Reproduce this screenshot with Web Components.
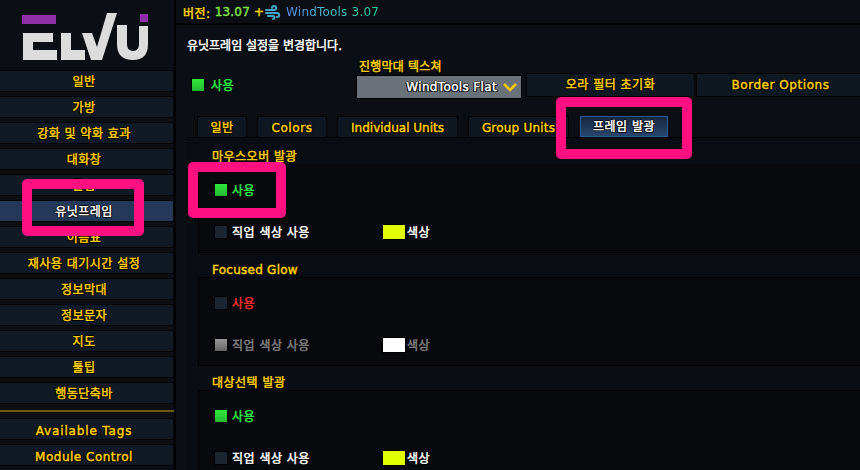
<!doctype html>
<html>
<head>
<meta charset="utf-8">
<style>
html, body { margin: 0; height: 100%; background: #000; overflow: hidden; }
body {
  font: 400 12px "DejaVu Sans", "Noto Sans CJK KR", sans-serif;
  color: #fff;
}
</style>
</head>
<body>
<elv-window>
  <elv-sidebar slot="side">
    <elv-logo></elv-logo>
    <elv-nav>일반</elv-nav>
    <elv-nav>가방</elv-nav>
    <elv-nav>강화 및 약화 효과</elv-nav>
    <elv-nav>대화창</elv-nav>
    <elv-nav>툴팁</elv-nav>
    <elv-nav active>유닛프레임</elv-nav>
    <elv-nav>이름표</elv-nav>
    <elv-nav>재사용 대기시간 설정</elv-nav>
    <elv-nav>정보막대</elv-nav>
    <elv-nav>정보문자</elv-nav>
    <elv-nav>지도</elv-nav>
    <elv-nav>툴팁</elv-nav>
    <elv-nav>행동단축바</elv-nav>
    <elv-rule></elv-rule>
    <elv-nav style="letter-spacing:.85px">Available Tags</elv-nav>
    <elv-nav style="letter-spacing:.5px">Module Control</elv-nav>
  </elv-sidebar>
  <elv-version slot="top"></elv-version>
  <elv-panel slot="main">
    <elv-intro slot="intro" style="letter-spacing:0">유닛프레임 설정을 변경합니다.</elv-intro>
    <elv-check slot="enable" state="on" style="gap:7px">사용</elv-check>
    <elv-select slot="select" label="진행막대 텍스쳐"><span style="letter-spacing:.35px">WindTools Flat</span></elv-select>
    <elv-button slot="btn">오라 필터 초기화</elv-button>
    <elv-button slot="btn" style="letter-spacing:.55px">Border Options</elv-button>
    <elv-tab slot="tabs" style="width:50px">일반</elv-tab>
    <elv-tab slot="tabs" style="width:70px;letter-spacing:.6px">Colors</elv-tab>
    <elv-tab slot="tabs" style="width:121px">Individual Units</elv-tab>
    <elv-tab slot="tabs" style="width:101px;letter-spacing:.2px">Group Units</elv-tab>
    <elv-tab slot="tabs" style="width:88px" active>프레임 발광</elv-tab>
    <elv-group title="마우스오버 발광">
      <elv-check state="on">사용</elv-check>
      <elv-check slot="second">직업 색상 사용</elv-check>
      <elv-swatch slot="second" color="#e0ff00">색상</elv-swatch>
    </elv-group>
    <elv-group title="Focused Glow">
      <elv-check state="off">사용</elv-check>
      <elv-check slot="second" state="disabled">직업 색상 사용</elv-check>
      <elv-swatch slot="second" color="#ffffff" disabled>색상</elv-swatch>
    </elv-group>
    <elv-group title="대상선택 발광">
      <elv-check state="on">사용</elv-check>
      <elv-check slot="second">직업 색상 사용</elv-check>
      <elv-swatch slot="second" color="#e0ff00">색상</elv-swatch>
    </elv-group>
  </elv-panel>
  <elv-mark style="left:22px;top:179px;width:122px;height:57px"></elv-mark>
  <elv-mark style="left:188px;top:162px;width:98px;height:56px"></elv-mark>
  <elv-mark style="left:556px;top:97px;width:136px;height:62px"></elv-mark>
</elv-window>
<script>
const outline = '-1px 0 #000, 1px 0 #000, 0 -1px #000, 0 1px #000, 1px 1px #000, -1px 1px #000'
const font = '"DejaVu Sans", "Noto Sans CJK KR", sans-serif'
const heavy = '-webkit-text-stroke: .45px currentColor;'
const hangul = /[가-힣]/

// small helper so each element only lists its template
function define(name, css, markup, proto) {
  const tpl = document.createElement('template')
  tpl.innerHTML = `<style>${css}</style>${markup}`
  class El extends HTMLElement {
    constructor() {
      super()
      this.attachShadow({mode: 'open'})
      this.shadowRoot.append(tpl.content.cloneNode(true))
    }
    connectedCallback() {
      const own = [...this.childNodes].filter(n => n.nodeType == 3).map(n => n.data).join('')
      if (hangul.test(own) && !this.style.letterSpacing) this.style.letterSpacing = '.5px'
      if (own.trim() && !hangul.test(own)) this.setAttribute('latin', '')
      if (proto) proto.call(this, this.shadowRoot)
    }
  }
  customElements.define(name, El)
}

define('elv-window', `
:host { display: grid; grid-template-columns: 175px 1fr; grid-template-rows: 24px 1fr; width: 860px; height: 470px; position: relative; overflow: hidden; background: #000; }
.side { grid-row: 1 / 3; }
.top { padding-left: 1px; }
.main { padding: 1px 0 0 1px; min-width: 0; }
`, `<div class="side"><slot name="side"></slot></div>
<div class="top"><slot name="top"></slot></div>
<div class="main"><slot name="main"></slot></div>
<slot></slot>`)

define('elv-sidebar', `
:host { display: flex; flex-direction: column; align-items: stretch; height: 470px; background: #0b0e13; border-right: 1px solid #000; box-sizing: border-box; }
`, `<slot></slot>`)

define('elv-logo', `
:host { display: block; height: 70px; flex: none; }
svg { display: block; }
`, `<svg width="174" height="70" viewBox="0 0 174 70">
  <rect x="22" y="15" width="34" height="9" fill="#8f2fa8"/>
  <rect x="140" y="14" width="8" height="8" fill="#8f2fa8"/>
  <path fill="#dcdcdc" d="M23 33H53V42H33V50H57V60H23Z"/>
  <path fill="#dcdcdc" d="M61 33H71V50H85V60H61Z"/>
  <path fill="#dcdcdc" d="M82 33H92L97 47L107 13H117L102 60H91Z"/>
  <path fill="#dcdcdc" d="M117 25H127V44Q127 51 133 51Q139 51 139 44V26H148V44Q148 60 133 60Q117 60 117 44Z"/>
</svg>`)

define('elv-nav', `
:host { display: block; flex: none; height: 22px; margin-bottom: 4px; box-sizing: border-box; padding-right: 5px; background: #111a24; border-top: 1px solid #000; border-bottom: 1px solid #000; border-right: 1px solid #000;
  text-align: center; font: 400 12px/22px ${font}; ${heavy} color: #ffd100; text-shadow: ${outline}; }
:host([latin]) { line-height: 24px; }
:host([active]) { background: #24395a; color: #fff; }
`, `<slot></slot>`)

define('elv-rule', `
:host { display: block; flex: none; height: 2px; background: #6b5a10; margin: 2px 0 6px; }
`, ``)

define('elv-version', `
:host { display: flex; align-items: center; height: 23px; padding: 1px 0 0 7px; box-sizing: border-box; background: #0b0e13; font: 400 12px ${font}; text-shadow: 1px 1px #000; }
.k { color: #ffd100; ${heavy} letter-spacing: .5px; }
.v { color: #7fe04a; margin-left: 4px; letter-spacing: .2px; ${heavy} }
.p { color: #ffd100; margin-left: 4px; ${heavy} }
svg { margin: 0 5px 0 1px; }
.w { background: linear-gradient(90deg, #5a8cf0, #3fc8c0 60%, #20d0a0); -webkit-background-clip: text; background-clip: text; color: transparent; text-shadow: none; letter-spacing: .2px; font-size: 12px; }
`, `<span class="k">버전:</span><span class="v">13.07</span><span class="p">+</span>
<svg width="16" height="15" viewBox="0 0 16 15" fill="none" stroke="#45a6c8" stroke-width="2" stroke-linecap="round">
  <path d="M1 5H9C12 5 12 1 9 1C8 1 7 2 7 3"/>
  <path d="M1 8H12C15 8 15 12 12 12"/>
  <path d="M3 11H8C10 11 10 14 8 14"/>
</svg>
<span class="w">WindTools 3.07</span>`)

define('elv-panel', `
:host { display: block; height: 445px; background: #0b0e13; box-sizing: border-box; padding-left: 11px; overflow: hidden; }
.intro { height: 40px; padding-top: 11px; box-sizing: border-box; }
.row { display: flex; height: 50px; }
.enable { width: 169px; flex: none; padding: 11px 0 0 5px; box-sizing: border-box; }
.tabs { display: flex; gap: 10px; padding-left: 10px; height: 21px; box-sizing: border-box; margin-top: 1px; }
.body { border-top: 1px solid #000; margin-right: -1px; padding-left: 11px; background: #090c10; height: 340px; }
.btns { display: flex; gap: 1px; padding-left: 4px; }
`, `<div class="intro"><slot name="intro"></slot></div>
<div class="row">
  <div class="enable"><slot name="enable"></slot></div>
  <slot name="select"></slot>
  <div class="btns"><slot name="btn"></slot></div>
</div>
<div class="tabs"><slot name="tabs"></slot></div>
<div class="body"><slot></slot></div>`)

define('elv-intro', `
:host { display: block; font: 400 12px ${font}; ${heavy} color: #fff; text-shadow: 1px 1px #000; }
`, `<slot></slot>`)

define('elv-check', `
:host { display: inline-flex; align-items: center; gap: 5px; font: 400 12px ${font}; ${heavy} color: #fff; text-shadow: 1px 1px #000; }
i { display: block; width: 12px; height: 12px; background: #1a2531; outline: 1px solid #000; }
:host([state=on]) { color: #2fe84a; }
:host([state=on]) i { background: linear-gradient(#2fe83a, #26b834); }
:host([state=off]) { color: #f03030; }
:host([state=disabled]) { color: #808080; }
:host([state=disabled]) i { background: linear-gradient(#999, #666); }
`, `<i></i><slot></slot>`)

define('elv-swatch', `
:host { display: inline-flex; align-items: center; gap: 2px; font: 400 12px ${font}; ${heavy} color: #fff; text-shadow: 1px 1px #000; }
:host([disabled]) { color: #808080; }
i { display: block; width: 22px; height: 14px; outline: 1px solid #000; }
`, `<i></i><slot></slot>`, function (root) {
  root.querySelector('i').style.background = this.getAttribute('color')
})

define('elv-select', `
:host { display: block; width: 166px; flex: none; margin-top: -5px; font: 400 12px ${font}; ${heavy} }
.l { color: #ffd100; text-shadow: 1px 1px #000; height: 15px; line-height: 15px; padding-left: 3px; letter-spacing: .2px; }
.b { display: flex; align-items: center; justify-content: flex-end; gap: 6px; height: 24px; padding-right: 4px; box-sizing: border-box; background: #6a7178; border: 1px solid #000; color: #fff; text-shadow: ${outline}; }
svg { display: block; }
`, `<div class="l"></div><div class="b"><span><slot></slot></span>
<svg width="14" height="9" viewBox="0 0 14 9"><path d="M1 1L7 7L13 1" fill="none" stroke="#ffc800" stroke-width="2.6"/></svg></div>`, function (root) {
  root.querySelector('.l').textContent = this.getAttribute('label')
})

define('elv-button', `
:host { display: block; width: 169px; flex: none; height: 24px; margin-top: 8px; box-sizing: border-box; background: #0f1720; border: 1px solid #000; text-align: center; font: 400 12px/23px ${font}; ${heavy} color: #ffd100; text-shadow: ${outline}; }
`, `<slot></slot>`)

define('elv-tab', `
:host { display: block; flex: none; height: 21px; box-sizing: border-box; background: #0f1720; border: 1px solid #000; border-bottom: 0; text-align: center; font: 400 12px/22px ${font}; ${heavy} color: #ffd100; text-shadow: ${outline}; }
:host([active]) { background: linear-gradient(#16263f, #28456d); border: 1px solid #2d5896; color: #fff; margin-left: 1px; line-height: 20px; }
`, `<slot></slot>`)

define('elv-group', `
:host { display: block; font: 400 12px ${font}; }
.t { height: 26px; box-sizing: border-box; padding: 12px 0 0 14px; color: #ffd100; ${heavy} text-shadow: 1px 1px #000; line-height: 14px; }
.box { height: 89px; box-sizing: border-box; border: 1px solid #000; border-right: 0; background: #07090d; padding: 16px 0 0 16px; margin-bottom: -2px; }
.first { height: 42px; }
.second { display: flex; }
::slotted(elv-check[slot=second]) { width: 168px; }
`, `<div class="t"></div><div class="box">
  <div class="first"><slot></slot></div>
  <div class="second"><slot name="second"></slot></div>
</div>`, function (root) {
  const title = this.getAttribute('title')
  const t = root.querySelector('.t')
  t.textContent = title
  t.style.letterSpacing = hangul.test(title) ? '.5px' : '.25px'
  this.removeAttribute('title')
})

define('elv-mark', `
:host { display: block; position: absolute; box-sizing: border-box; border: 10px solid #ff1080; border-radius: 5px; }
`, ``)
</script>
</body>
</html>
